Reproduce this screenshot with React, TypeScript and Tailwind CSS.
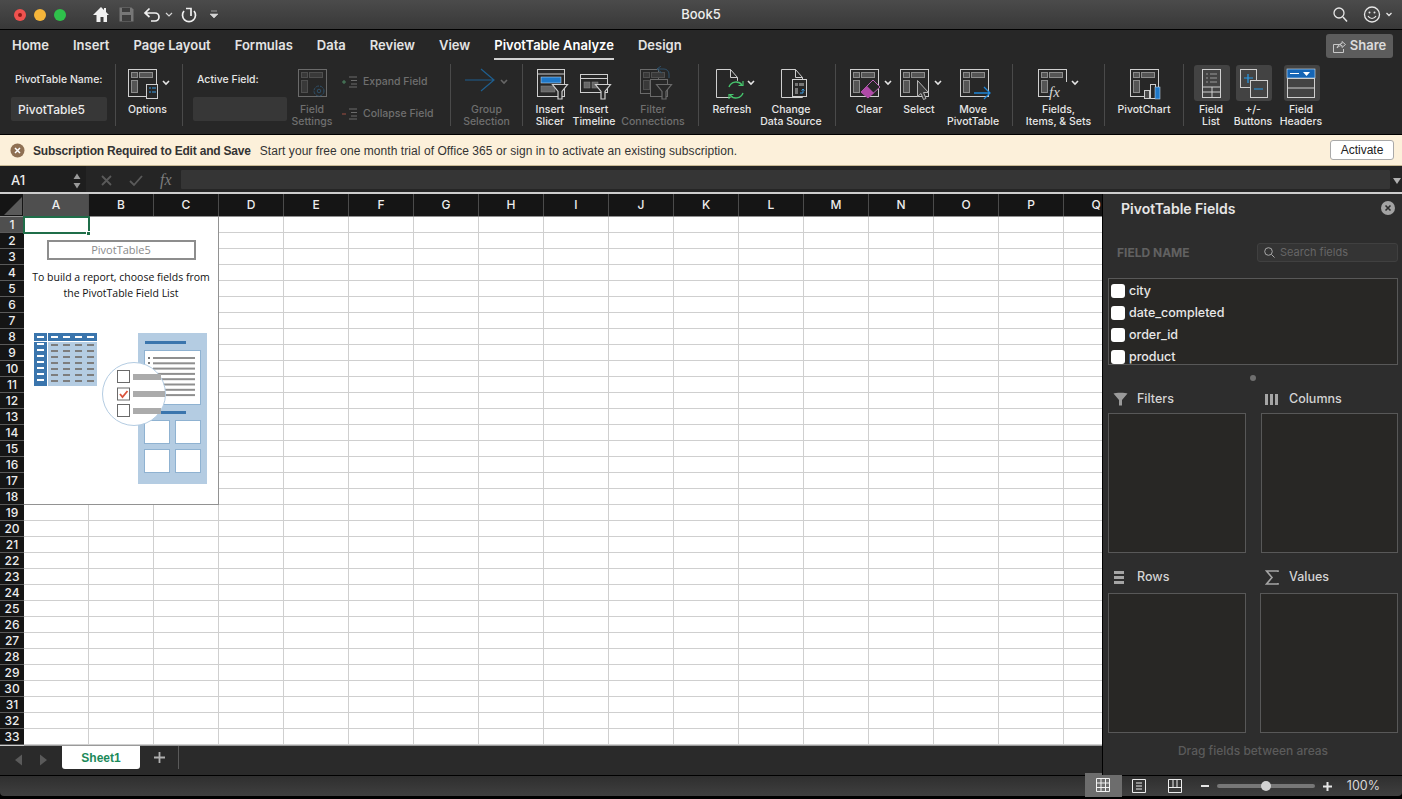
import type { ReactNode } from 'react';

const COLUMNS = ['A', 'B', 'C', 'D', 'E', 'F', 'G', 'H', 'I', 'J', 'K', 'L', 'M', 'N', 'O', 'P', 'Q'];
const ROWS = Array.from({ length: 33 }, (_, i) => i + 1);
const TABS = ['Home', 'Insert', 'Page Layout', 'Formulas', 'Data', 'Review', 'View', 'PivotTable Analyze', 'Design'];
const FIELDS = ['city', 'date_completed', 'order_id', 'product'];

const LINE = '#cfcfcf';
const DIM = '#8c8c8c';

// icons are drawn in page coordinates, the viewBox is the button's slot
function Slot({ x, w, children, off }: { x: number; w: number; children: ReactNode; off?: boolean }) {
  return (
    <svg width={w} height={36} viewBox={`${x} 66 ${w} 36`} fill="none" className={off ? 'opacity-40' : ''}>
      {children}
    </svg>
  );
}

function Sheet({ x, y = 69, w = 28, h = 27, c = LINE }: { x: number; y?: number; w?: number; h?: number; c?: string }) {
  return (
    <g>
      <rect x={x + 0.5} y={y + 0.5} width={w} height={h} stroke={c} />
      <rect x={x + 3.5} y={y + 3.5} width={6} height={5} stroke={DIM} fill="#555" />
      <rect x={x + 11.5} y={y + 3.5} width={13} height={5} stroke={DIM} fill="#555" />
      <rect x={x + 3.5} y={y + 11.5} width={6} height={h - 15} stroke={DIM} fill="#555" />
    </g>
  );
}

function Chevron({ x, y = 83, c = '#e5e5e5' }: { x: number; y?: number; c?: string }) {
  return <path d={`M${x - 3} ${y - 2}l3 3l3 -3`} stroke={c} strokeWidth={1.6} />;
}

function Page({ x, y = 69 }: { x: number; y?: number }) {
  return <path d={`M${x + 0.5} ${y + 0.5}h14l7 8v20h-21zM${x + 14.5} ${y + 0.5}v8h7`} stroke={LINE} />;
}

function Funnel({ x, y }: { x: number; y: number }) {
  return <path d={`M${x + 0.5} ${y + 0.5}h15l-5.500 7v7.500h-4v-7.500z`} stroke={LINE} strokeWidth={1.2} fill="#272727" />;
}

function Btn({ w, label, icon, off, active }: { w: number; label: string[]; icon: ReactNode; off?: boolean; active?: boolean }) {
  return (
    <div className="flex flex-col items-center" style={{ width: w }}>
      <div className="relative h-[36px] pt-0">
        {active && <div className="absolute left-1/2 top-[-1px] ml-[1px] h-[36px] w-[36px] -translate-x-1/2 rounded-[3px] bg-[#434343]" />}
        <div className="relative">{icon}</div>
      </div>
      <div className={`mt-[2px] flex flex-col items-center text-[10.5px] font-medium leading-[12px] whitespace-nowrap ${off ? 'text-[#6f6f6f]' : 'text-[#e6e6e6]'}`}>
        {label.map((l) => (
          <span key={l}>{l}</span>
        ))}
      </div>
    </div>
  );
}

function Group({ w, pl = 0, children }: { w: number; pl?: number; children: ReactNode }) {
  return (
    <div className="flex h-full shrink-0 items-start border-r border-[#4a4a4a] pt-[2px]" style={{ width: w + 1, paddingLeft: pl }}>
      {children}
    </div>
  );
}

function TitleBar() {
  return (
    <div className="relative flex h-[30px] shrink-0 items-center border-b border-black bg-gradient-to-b from-[#4b4b4b] to-[#383838]">
      <div className="ml-[14px] flex gap-[8px]">
        <div className="flex h-[12px] w-[12px] items-center justify-center rounded-full bg-[#f0524f]"><div className="h-[4px] w-[4px] rounded-full bg-[#8c1a15]" /></div>
        <div className="h-[12px] w-[12px] rounded-full bg-[#f5b53a]" />
        <div className="h-[12px] w-[12px] rounded-full bg-[#2fc14b]" />
      </div>
      <svg className="absolute left-[90px] top-[4px]" width={130} height={22} viewBox="90 4 130 22" fill="none">
        <path d="M93 15l8 -8l3 3v-2h2v4l3 3h-2v7h-3.500v-5h-3v5h-4v-7z" fill="#f2f2f2" />
        <path d="M119.500 7.500h12l2 2v12h-14z" fill="#777" />
        <rect x="122" y="8" width="8" height="4" fill="#3d3d3d" />
        <rect x="122" y="15" width="9" height="6" fill="#3d3d3d" />
        <path d="M149.500 8.500l-4.500 4.500l4.500 4M145 13h10a4 4 0 0 1 0 8h-4" stroke="#f0f0f0" strokeWidth={1.7} />
        <path d="M166 13l3 3l3 -3" stroke="#d5d5d5" strokeWidth={1.2} />
        <path d="M194 11a6.500 6.500 0 1 1 -10 0M186 8.500h5v7.500" stroke="#f0f0f0" strokeWidth={1.7} />
        <path d="M211 11h6M210 14h8l-4 4z" fill="#d5d5d5" stroke="#d5d5d5" strokeWidth={0.6} />
      </svg>
      <span className="absolute left-1/2 top-[6px] -translate-x-1/2 text-[13px] font-medium leading-[17px] text-[#ededed]">Book5</span>
      <svg className="absolute left-[1330px] top-[3px]" width={70} height={24} viewBox="1330 3 70 24" fill="none">
        <circle cx="1339" cy="13" r="5" stroke="#e6e6e6" strokeWidth={1.3} />
        <path d="M1343 17l4 4.500" stroke="#e6e6e6" strokeWidth={1.5} />
        <circle cx="1372" cy="14.500" r="7.500" stroke="#e6e6e6" strokeWidth={1.3} />
        <circle cx="1369.500" cy="12.500" r="1" fill="#e6e6e6" />
        <circle cx="1374.500" cy="12.500" r="1" fill="#e6e6e6" />
        <path d="M1368 16a4.500 4.500 0 0 0 8 0" stroke="#e6e6e6" strokeWidth={1.1} />
        <path d="M1386.500 13l2.500 2.500l2.500 -2.500" stroke="#e6e6e6" strokeWidth={1.3} />
      </svg>
    </div>
  );
}

function TabBar() {
  return (
    <div className="flex h-[30px] shrink-0 items-start justify-between bg-[#272727] pl-[12px] pr-[9px]">
      <div className="flex gap-[24px] pt-[7px]">
        {TABS.map((t) => (
          <div key={t} className={`flex h-[23px] flex-col text-[13px] font-semibold leading-[16px] whitespace-nowrap ${t === 'PivotTable Analyze' ? 'border-b-[2px] border-[#d0d0d0] text-white' : 'text-[#e4e4e4]'}`}>
            {t}
          </div>
        ))}
      </div>
      <div className="mt-[4px] flex h-[24px] w-[67px] items-center justify-center gap-[4px] rounded-[3px] bg-[#5c5c5c] text-[13px] font-semibold text-[#dcdcdc]">
        <svg width={13} height={14} viewBox="0 0 13 14" fill="none" stroke="#c8c8c8">
          <path d="M8 5.500H.5v8h10V10M4 9c1 -3 3 -4.500 5 -4.500V2.500l3.500 3L9 8.500V6.500C7 6.500 5.500 7.500 4 9z" />
        </svg>
        Share
      </div>
    </div>
  );
}

function Ribbon() {
  return (
    <div className="flex h-[75px] shrink-0 items-start border-b border-black bg-[#272727] pt-[4px]">
      <div className="flex h-[62px]">
        <Group w={115} pl={11}>
          <div className="flex flex-col">
            <span className="ml-[4px] mt-[7px] text-[10.5px] font-medium leading-[14px] text-[#e6e6e6] whitespace-nowrap">PivotTable Name:</span>
            <div className="mt-[10px] flex h-[24px] w-[96px] items-center rounded-[2px] bg-[#373737] pl-[7px] pt-[2px] text-[12px] font-medium text-[#ececec]">PivotTable5</div>
          </div>
        </Group>
        <Group w={66}>
          <Btn
            w={63}
            label={['Options']}
            icon={
              <Slot x={116} w={63}>
                <Sheet x={128} />
                <rect x="146.500" y="84.500" width="11" height="14" fill="#272727" stroke={LINE} />
                <path d="M149 88h2M152 88h4M149 92h2M152 92h4" stroke="#3a9be0" />
                <Chevron x={166} />
              </Slot>
            }
          />
        </Group>
        <Group w={267}>
          <div className="flex flex-col pl-[10px]">
            <span className="ml-[4px] mt-[7px] text-[10.5px] font-medium leading-[14px] text-[#e6e6e6] whitespace-nowrap">Active Field:</span>
            <div className="mt-[10px] h-[24px] w-[94px] rounded-[2px] bg-[#373737]" />
          </div>
          <div className="ml-[3px]">
            <Btn
              w={44}
              off
              label={['Field', 'Settings']}
              icon={
                <Slot x={290} w={44} off>
                  <Sheet x={298} />
                  <circle cx="319" cy="91" r="5" stroke="#3a8fd0" fill="#272727" strokeDasharray="3 1" />
                  <circle cx="319" cy="91" r="1.800" stroke="#3a8fd0" />
                </Slot>
              }
            />
          </div>
          <div className="ml-[8px] flex flex-col gap-[18px] pt-[9px] text-[10.5px] font-medium leading-[14px] text-[#6f6f6f] whitespace-nowrap">
            <div className="flex items-center gap-[5px]">
              <svg width={16} height={12} viewBox="0 0 16 12" fill="none" className="opacity-70">
                <path d="M0 6h4M2 4v4" stroke="#5fae7c" />
                <path d="M7 1h8M9 4.500h6M9 8h6M7 11h8" stroke="#8a8a8a" />
              </svg>
              <span>Expand Field</span>
            </div>
            <div className="flex items-center gap-[5px]">
              <svg width={16} height={12} viewBox="0 0 16 12" fill="none" className="opacity-70">
                <path d="M0 6h4" stroke="#d0604f" />
                <path d="M7 1h8M9 4.500h6M9 8h6M7 11h8" stroke="#8a8a8a" />
              </svg>
              <span>Collapse Field</span>
            </div>
          </div>
        </Group>
        <Group w={71}>
          <Btn
            w={71}
            off
            label={['Group', 'Selection']}
            icon={
              <Slot x={451} w={71}>
                <path d="M465 80h29M481 69l13 11l-13 11" stroke="#1f5f8f" strokeWidth={1.2} />
                <Chevron x={504} y={82} c="#666" />
              </Slot>
            }
          />
        </Group>
        <Group w={175} pl={5}>
          <Btn
            w={44}
            label={['Insert', 'Slicer']}
            icon={
              <Slot x={528} w={44}>
                <rect x="537.500" y="69.500" width="27" height="27" stroke={LINE} />
                <path d="M537 74h28" stroke={LINE} />
                <rect x="541" y="77" width="20" height="6" fill="#1f78c8" stroke="#cfe4f5" strokeWidth={0.5} />
                <rect x="541" y="86" width="14" height="6" fill="#666" stroke={DIM} strokeWidth={0.5} />
                <Funnel x={552} y={84} />
              </Slot>
            }
          />
          <Btn
            w={44}
            label={['Insert', 'Timeline']}
            icon={
              <Slot x={572} w={44}>
                <rect x="580.500" y="74.500" width="27" height="18" stroke={LINE} />
                <path d="M580 78.500h28" stroke={LINE} />
                <rect x="584" y="82" width="6" height="6" fill="#666" stroke={DIM} strokeWidth={0.5} />
                <rect x="592" y="82" width="6" height="6" fill="#666" stroke={DIM} strokeWidth={0.5} />
                <Funnel x={595} y={84} />
              </Slot>
            }
          />
          <div className="ml-[6px]">
            <Btn
              w={62}
              off
              label={['Filter', 'Connections']}
              icon={
                <Slot x={622} w={62} off>
                  <Sheet x={640} w={18} h={24} />
                  <path d="M662 73l-5 -4l4 -3M657 69h7a5 5 0 0 1 5 5v4" stroke="#3a8fd0" />
                  <rect x="650.500" y="79.500" width="17" height="17" fill="#272727" stroke={LINE} />
                  <Funnel x={656} y={84} />
                </Slot>
              }
            />
          </div>
        </Group>
        <Group w={136}>
          <Btn
            w={66}
            label={['Refresh']}
            icon={
              <Slot x={699} w={66}>
                <Page x={716} />
                <circle cx="736" cy="90" r="9.500" fill="#272727" />
                <path d="M729 87a7.500 7.500 0 0 1 13 -2M743 93a7.500 7.500 0 0 1 -13 2" stroke="#46c46c" strokeWidth={1.4} />
                <path d="M743 81v4.500h-4.500M729 99v-4.500h4.500" stroke="#46c46c" strokeWidth={1.2} />
                <Chevron x={751} />
              </Slot>
            }
          />
          <Btn
            w={52}
            label={['Change', 'Data Source']}
            icon={
              <Slot x={765} w={52}>
                <Page x={781} />
                <rect x="792.500" y="79.500" width="14" height="17" fill="#272727" stroke={LINE} />
                <rect x="795" y="83" width="3" height="3" fill="#777" />
                <rect x="799" y="83" width="5" height="3" fill="#777" />
                <rect x="795" y="88" width="3" height="6" fill="#777" />
                <path d="M800 93h3v-4m-1.500 1.500l1.500 -1.500l1.500 1.500" stroke="#3a9be0" />
              </Slot>
            }
          />
        </Group>
        <Group w={176} pl={8}>
          <Btn
            w={50}
            label={['Clear']}
            icon={
              <Slot x={844} w={50}>
                <Sheet x={850} />
                <path d="M873 80l7 7l-12 11l-7 -6z" fill="#272727" stroke="#b95fb5" />
                <path d="M867 86l7 7l-6 5l-7 -6z" fill="#b04aa8" />
                <Chevron x={888} />
              </Slot>
            }
          />
          <Btn
            w={50}
            label={['Select']}
            icon={
              <Slot x={894} w={50}>
                <Sheet x={900} />
                <path d="M917.500 80.500v16l3.500 -3l2.500 6l2.500 -1l-2.500 -6h5z" fill="#3a3a3a" stroke="#b5b5b5" />
                <Chevron x={938} />
              </Slot>
            }
          />
          <Btn
            w={58}
            label={['Move', 'PivotTable']}
            icon={
              <Slot x={944} w={58}>
                <Sheet x={960} />
                <path d="M974 93h16M984 87l6 6l-6 6" stroke="#1f86d8" strokeWidth={1.3} />
              </Slot>
            }
          />
        </Group>
        <Group w={91}>
          <Btn
            w={91}
            label={['Fields,', 'Items, & Sets']}
            icon={
              <Slot x={1013} w={91}>
                <Sheet x={1038} />
                <rect x="1050" y="82" width="17" height="17" fill="#272727" />
                <text x="1049" y="97" fontFamily="'Liberation Serif', serif" fontStyle="italic" fontSize="15" fill="#d5d5d5">fx</text>
                <Chevron x={1075} />
              </Slot>
            }
          />
        </Group>
        <Group w={78}>
          <Btn
            w={78}
            label={['PivotChart']}
            icon={
              <Slot x={1105} w={78}>
                <Sheet x={1130} />
                <rect x="1144.500" y="90.500" width="5" height="8" fill="#4a4a4a" stroke={LINE} />
                <rect x="1150.500" y="84.500" width="5" height="14" fill="#272727" stroke={LINE} />
                <rect x="1155" y="87" width="5" height="12" fill="#1f78c8" stroke="#cfe4f5" strokeWidth={0.5} />
              </Slot>
            }
          />
        </Group>
        <div className="flex items-start pl-[6px] pt-[2px]">
          <Btn
            w={42}
            active
            label={['Field', 'List']}
            icon={
              <Slot x={1193} w={36}>
                <rect x="1202.500" y="69.500" width="18" height="28" stroke={LINE} />
                <path d="M1206 74h2M1210 74h7M1206 78h2M1210 78h7M1206 82h2M1210 82h7" stroke="#9a9a9a" />
                <path d="M1203 87h18M1203 92h18M1212 87v10" stroke={LINE} />
              </Slot>
            }
          />
          <Btn
            w={42}
            active
            label={['+/-', 'Buttons']}
            icon={
              <Slot x={1235} w={36}>
                <rect x="1240.500" y="69.500" width="16" height="18" stroke={LINE} />
                <rect x="1250.500" y="80.500" width="17" height="17" fill="#434343" stroke={LINE} />
                <path d="M1244 78h9M1248 74v9M1254 89h9" stroke="#2a9be8" strokeWidth={1.2} />
              </Slot>
            }
          />
          <div className="ml-[5px]">
            <Btn
              w={44}
              active
              label={['Field', 'Headers']}
              icon={
                <Slot x={1283} w={36}>
                  <rect x="1287" y="69" width="28" height="9" fill="#1565b5" stroke="#cfe4f5" strokeWidth={0.6} />
                  <path d="M1290 73.500h9" stroke="#fff" />
                  <path d="M1303 72h7l-3.500 4z" fill="#fff" />
                  <rect x="1287.500" y="78.500" width="27" height="19" stroke={LINE} />
                  <path d="M1287 88h28" stroke={LINE} />
                </Slot>
              }
            />
          </div>
        </div>
      </div>
    </div>
  );
}

function MessageBar() {
  return (
    <div className="flex h-[31px] shrink-0 items-center border-b border-[#c9b995] bg-[#fcf0da] pl-[10px] pr-[8px] font-['Liberation_Sans',sans-serif] text-[12px] text-[#333]">
      <svg width={15} height={15} viewBox="0 0 15 15">
        <circle cx="7.500" cy="7.500" r="7" fill="#8f7053" />
        <path d="M5 5l5 5M10 5l-5 5" stroke="#fff" strokeWidth={1.5} />
      </svg>
      <span className="ml-[8px] pt-[1px] font-bold tracking-[-0.2px]">Subscription Required to Edit and Save</span>
      <span className="ml-[9px] pt-[1px] tracking-[0.065px]">Start your free one month trial of Office 365 or sign in to activate an existing subscription.</span>
      <div className="ml-auto flex h-[20px] w-[64px] items-center justify-center rounded-[3px] border border-[#a9a9a9] bg-white text-[#222]">Activate</div>
    </div>
  );
}

function FormulaBar() {
  return (
    <div className="flex h-[28px] shrink-0 border-b-[2px] border-[#cdcdcd] bg-[#252525]">
      <div className="flex h-[26px] w-[86px] items-center justify-between bg-[#1e1e1e] pl-[11px] pr-[4px] pt-[3px] text-[13px] font-medium text-[#ececec]">
        A1
        <svg width={10} height={20} viewBox="0 0 10 20">
          <path d="M1.500 8L5 2.500L8.500 8zM1.500 12L5 17.500L8.500 12z" fill="#9a9a9a" />
        </svg>
      </div>
      <div className="flex w-[95px] items-center">
        <svg width={95} height={26} viewBox="86 166 95 26" fill="none">
          <path d="M102 176l9 9M111 176l-9 9" stroke="#5a5a5a" strokeWidth={1.8} />
          <path d="M130 181l4 4l8 -9" stroke="#5a5a5a" strokeWidth={1.8} />
          <text x="160" y="185" fontFamily="'Liberation Serif', serif" fontStyle="italic" fontSize="16" fill="#7c7c7c">fx</text>
        </svg>
      </div>
      <div className="mt-[4px] h-[19px] w-[1209px] rounded-[1px] bg-[#353535]" />
      <svg className="mt-[12px] ml-[2px]" width={10} height={7} viewBox="0 0 10 7">
        <path d="M1 0h8L5 6z" fill="#b0b0b0" />
      </svg>
    </div>
  );
}

function Illustration() {
  const dashes = [0, 1, 2, 3];
  const lines = [0, 1, 2, 3, 4, 5, 6];
  return (
    <svg className="absolute left-[10px] top-[116px]" width={174} height={151} viewBox="34 333 174 151" fill="none">
      <rect x="34" y="333" width="63" height="8" fill="#3a75ad" />
      <rect x="34" y="342" width="13" height="44" fill="#3a75ad" />
      <rect x="48" y="342" width="49" height="44" fill="#b4cce2" />
      <path d="M47.500 333v8" stroke="#fff" />
      {[37, 51, 63, 75, 87].map((x) => (
        <rect key={x} x={x} y="336" width="7" height="2" fill="#fff" />
      ))}
      {lines.map((l) => (
        <g key={l}>
          <rect x="37" y={343 + l * 6} width="7" height="2" fill="#fff" />
          {dashes.map((d) => (
            <rect key={d} x={51 + d * 12} y={344 + l * 6} width="7" height="2" fill="#7d7d7d" />
          ))}
        </g>
      ))}
      <rect x="138" y="333" width="69" height="151" fill="#b4cce2" />
      <rect x="145" y="341" width="41" height="3" fill="#3a75ad" />
      <rect x="144.500" y="350.500" width="56" height="54" fill="#fff" stroke="#8fb2d1" />
      {[0, 1, 2, 3, 4, 5, 6, 7].map((l) => (
        <rect key={l} x="153" y={357 + l * 5.300} width="42" height="2" fill="#8f8f8f" />
      ))}
      <rect x="148" y="357" width="2" height="2" fill="#777" />
      <rect x="148" y="362" width="2" height="2" fill="#777" />
      <rect x="160" y="411" width="26" height="3" fill="#3a75ad" />
      {[
        [144.5, 420.5],
        [175.5, 420.5],
        [144.5, 449.5],
        [175.5, 449.5],
      ].map(([x, y]) => (
        <rect key={x + '-' + y} x={x} y={y} width="25" height="23" fill="#fff" stroke="#8fb2d1" />
      ))}
      <circle cx="134" cy="394" r="31.500" fill="#fff" stroke="#b4cce2" />
      {[371, 388.5, 405].map((y) => (
        <rect key={y} x="117.500" y={y - 0.5} width="12" height="12" fill="#fff" stroke="#6a6a6a" />
      ))}
      <path d="M120 394l2.500 3l5 -6" stroke="#d9533c" strokeWidth={1.8} />
      <rect x="133" y="374" width="28" height="6" fill="#ababab" />
      <rect x="133" y="391" width="32" height="6" fill="#ababab" />
      <rect x="133" y="408" width="28" height="6" fill="#ababab" />
    </svg>
  );
}

function Placeholder() {
  return (
    <div className="absolute left-0 top-0 flex h-[288px] w-[195px] flex-col items-center border-r border-b border-[#929292] bg-white font-['Open_Sans',sans-serif] text-[#111]">
      <div className="mt-[23px] flex h-[20px] w-[149px] items-center justify-center border-[2px] border-[#8d8d8d] text-[11px] text-[#8a8a8a]">PivotTable5</div>
      <div className="mt-[9px] text-center text-[10.5px] leading-[16px] whitespace-nowrap">
        To build a report, choose fields from
        <br />
        the PivotTable Field List
      </div>
      <Illustration />
    </div>
  );
}

function SheetGrid() {
  return (
    <div className="flex min-w-0 flex-1 flex-col overflow-hidden bg-[#2a2a2a]">
      <div className="flex h-[23px] shrink-0 border-b border-[#8f8f8f] bg-[#151515] text-[12px] font-medium text-[#ededed]">
        <div className="flex w-[24px] shrink-0 items-end justify-end border-r border-[#555] p-[1px]">
          <div className="h-0 w-0 border-b-[18px] border-l-[18px] border-b-[#5a5a5a] border-l-transparent" />
        </div>
        {COLUMNS.map((c) => (
          <div key={c} className={`flex w-[65px] shrink-0 items-center justify-center border-r border-[#4b4b4b] ${c === 'A' ? 'bg-[#4f4f4f]' : ''}`}>
            {c}
          </div>
        ))}
      </div>
      <div className="flex h-[529px] shrink-0">
        <div className="flex w-[24px] shrink-0 flex-col bg-[#151515]">
          {ROWS.map((r) => (
            <div key={r} className={`flex h-[16px] shrink-0 items-center justify-center border-b border-[#5a5a5a] text-[12px] font-medium text-[#ededed] ${r === 1 ? 'bg-[#4f4f4f]' : ''}`}>
              {r}
            </div>
          ))}
          <div className="flex-1 bg-[#cfcfcf]" />
        </div>
        <div className="relative flex-1 overflow-hidden border-b border-[#9a9a9a] bg-white">
          {ROWS.map((r) => (
            <div key={r} className="flex h-[16px]">
              {COLUMNS.map((c) => (
                <div key={c} className="w-[65px] shrink-0 border-r border-b border-[#cfcfcf]" />
              ))}
            </div>
          ))}
          <Placeholder />
        </div>
      </div>
      <div className="flex h-[29px] shrink-0 items-start">
        <svg className="mt-[8px] ml-[14px]" width={34} height={12} viewBox="0 0 34 12">
          <path d="M1 6l7 -5.500v11zM33 6l-7 -5.500v11z" fill="#5a5a5a" />
        </svg>
        <div className="ml-[14px] flex h-[23px] w-[78px] items-center justify-center rounded-b-[3px] bg-white font-['Liberation_Sans',sans-serif] text-[12px] font-bold text-[#1b8a5a]">Sheet1</div>
        <div className="flex h-[23px] w-[39px] items-center justify-center border-r border-[#5a5a5a] text-[18px] font-medium text-[#b0b0b0]">
          <svg width={13} height={13} viewBox="0 0 13 13">
            <path d="M6.500 1v11M1 6.500h11" stroke="#b0b0b0" strokeWidth={1.8} />
          </svg>
        </div>
      </div>
    </div>
  );
}

function AreaLabel({ icon, label, pl }: { icon: ReactNode; label: string; pl: number }) {
  return (
    <div className="flex h-[20px] items-center text-[12.5px] font-medium text-[#d4d4d4]" style={{ paddingLeft: pl }}>
      <div className="flex w-[24px] shrink-0 items-center">{icon}</div>
      {label}
    </div>
  );
}

function FieldsPanel() {
  return (
    <div className="relative flex w-[300px] shrink-0 flex-col border-l border-black bg-[#2d2d2d] pl-[5px] pr-[4px]">
      <div className="flex h-[30px] shrink-0 items-center justify-between pb-[2px] pl-[13px] pr-[3px] text-[14px] font-semibold text-[#e6e6e6]">
        PivotTable Fields
        <svg width={14} height={14} viewBox="0 0 14 14">
          <circle cx="7" cy="7" r="7" fill="#a3a3a3" />
          <path d="M4.500 4.500l5 5M9.500 4.500l-5 5" stroke="#2d2d2d" strokeWidth={1.6} />
        </svg>
      </div>
      <div className="mt-[18px] flex h-[20px] shrink-0 items-center justify-between pl-[9px]">
        <span className="pt-[1px] text-[12px] font-bold text-[#616161]">FIELD NAME</span>
        <div className="flex h-[19px] w-[141px] items-center gap-[5px] rounded-[3px] border border-[#404040] bg-[#343434] pl-[6px] text-[11px] text-[#666]">
          <svg width={11} height={11} viewBox="0 0 11 11" fill="none" stroke="#a8a8a8">
            <circle cx="4.500" cy="4.500" r="3.800" />
            <path d="M7.500 7.500L10.500 10.500" />
          </svg>
          Search fields
        </div>
      </div>
      <div className="mt-[16px] h-[87px] shrink-0 overflow-hidden border border-[#585858] bg-[#282725] pl-[2px] pt-[1px]">
        {FIELDS.map((f) => (
          <div key={f} className="flex h-[22px] items-center gap-[4px] text-[12.5px] font-medium leading-[16px] text-[#e8e8e8]">
            <div className="h-[14px] w-[14px] rounded-[3px] bg-white" />
            {f}
          </div>
        ))}
      </div>
      <div className="mt-[10px] flex h-[6px] shrink-0 justify-center">
        <div className="h-[6px] w-[6px] rounded-full bg-[#6f6f6f]" />
      </div>
      <div className="mt-[8px] grid shrink-0 grid-cols-[138px_138px] justify-between">
        <AreaLabel
          pl={5}
          label="Filters"
          icon={
            <svg width={15} height={14} viewBox="0 0 15 14">
              <path d="M.5 1.500C2 .5 13 .5 14.500 1.500L9 8v5.500H6V8z" fill="#9a9a9a" />
            </svg>
          }
        />
        <AreaLabel
          pl={5}
          label="Columns"
          icon={
            <svg width={14} height={11} viewBox="0 0 14 11">
              <path d="M0 0h3v11H0zM5 0h3v11H5zM10 0h3v11h-3z" fill="#a5a5a5" />
            </svg>
          }
        />
        <div className="col-span-2 mt-[4px] grid grid-cols-[138px_137px] justify-between">
          <div className="h-[140px] border border-[#585858] bg-[#282725]" />
          <div className="h-[140px] border border-[#585858] bg-[#282725]" />
        </div>
        <div className="col-span-2 mt-[14px]">
          <div className="grid grid-cols-[138px_138px] justify-between">
            <AreaLabel
              pl={5}
              label="Rows"
              icon={
                <svg width={12} height={13} viewBox="0 0 12 13">
                  <path d="M1 0h10v3H1zM1 5h10v3H1zM1 10h10v3H1z" fill="#a5a5a5" />
                </svg>
              }
            />
            <AreaLabel
              pl={5}
              label="Values"
              icon={
                <svg width={14} height={15} viewBox="0 0 14 15" fill="none" stroke="#a5a5a5" strokeWidth={1.6}>
                  <path d="M13 2V1H1.500L7 7.500L1.500 14H13v-1" />
                </svg>
              }
            />
          </div>
          <div className="mt-[6px] grid grid-cols-[138px_138px] justify-between">
            <div className="h-[140px] border border-[#585858] bg-[#282725]" />
            <div className="h-[140px] border border-[#585858] bg-[#282725]" />
          </div>
        </div>
      </div>
      <div className="mt-[9px] text-center text-[12px] font-medium text-[#5b5b5b]">Drag fields between areas</div>
    </div>
  );
}

function StatusBar() {
  return (
    <div className="flex h-[21px] shrink-0 items-stretch justify-end rounded-b-[4px] border-t border-black bg-gradient-to-b from-[#2f2f2f] to-[#3f3f3f] pr-[22px]">
      <div className="-mt-[3px] flex h-[24px] w-[37px] items-center justify-center bg-[#6d6d6d]">
        <svg width={14} height={14} viewBox="0 0 14 14" fill="none" stroke="#f2f2f2">
          <path d="M.5.5h13v13H.5zM.5 5h13M.5 9.500h13M5 .5v13M9.500 .5v13" />
        </svg>
      </div>
      <div className="flex w-[35px] items-center justify-center">
        <svg width={14} height={14} viewBox="0 0 14 14" fill="none" stroke="#ededed">
          <path d="M.5.5h13v13H.5zM4 4h6M4 7h6M4 10h6" />
        </svg>
      </div>
      <div className="flex w-[37px] items-center justify-center">
        <svg width={14} height={14} viewBox="0 0 14 14" fill="none" stroke="#ededed">
          <path d="M.5.5h13v13H.5zM.5 8.500h13M5 .5v8M9 .5v8" />
        </svg>
      </div>
      <div className="ml-[7px] flex items-center">
        <div className="h-[2px] w-[8px] bg-[#e6e6e6]" />
        <div className="relative ml-[8px] h-[4px] w-[98px] rounded-full bg-[#777]">
          <div className="absolute left-[44px] top-[-3px] h-[10px] w-[10px] rounded-full bg-[#d2d2d2]" />
        </div>
        <svg className="ml-[8px]" width={9} height={9} viewBox="0 0 9 9">
          <path d="M4.500 0v9M0 4.500h9" stroke="#e6e6e6" strokeWidth={2} />
        </svg>
        <span className="ml-[15px] text-[12.5px] text-[#d8d8d8]">100%</span>
      </div>
    </div>
  );
}

// the active cell sits above the sheet, the panel header and the grid
function ActiveCell() {
  return (
    <>
      <div className="absolute left-[23px] top-[216px] h-[18px] w-[67px] border-[2px] border-[#1f6e49]" />
      <div className="absolute left-[86px] top-[231px] h-[5px] w-[5px] border border-white bg-[#1f6e49]" />
    </>
  );
}

export default function App() {
  return (
    <div className="relative flex h-[799px] w-[1402px] flex-col overflow-hidden bg-black font-['Inter',sans-serif]">
      <TitleBar />
      <TabBar />
      <Ribbon />
      <MessageBar />
      <FormulaBar />
      <div className="flex h-[581px] shrink-0">
        <SheetGrid />
        <FieldsPanel />
      </div>
      <StatusBar />
      <ActiveCell />
    </div>
  );
}
